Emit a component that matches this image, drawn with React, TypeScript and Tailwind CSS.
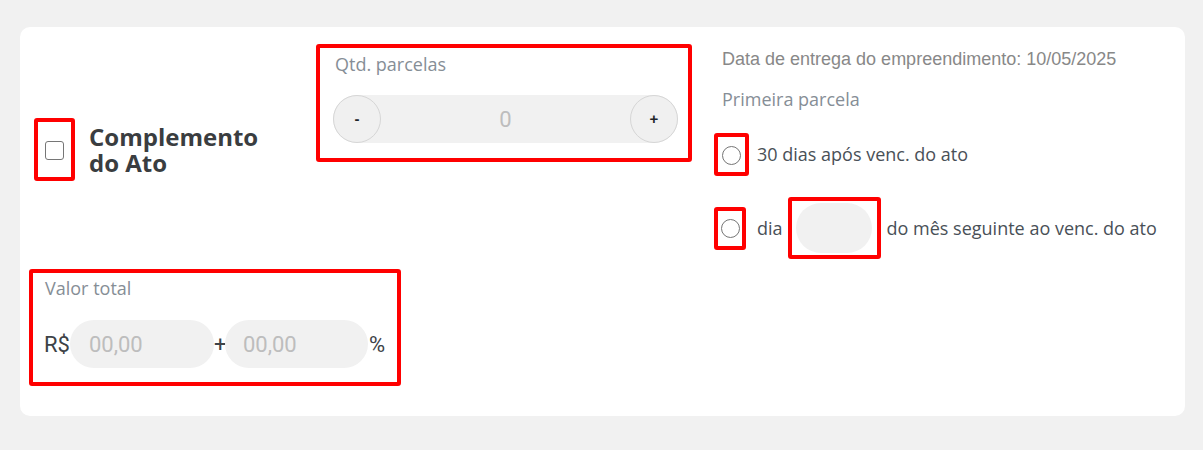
export default function App() {
  const open = { fontFamily: '"Open Sans", "Noto Sans", sans-serif' };
  const roboto = { fontFamily: 'Roboto, "Liberation Sans", sans-serif' };
  const arial = { fontFamily: '"Liberation Sans", Arial, sans-serif' };

  return (
    <div className="w-[1203px] h-[450px] bg-[#f1f1f1] pt-[27px] pl-[20px]">
      <div className="w-[1165px] h-[389px] bg-white rounded-[10px] pt-[17px] px-[9px]">
        {/* linha de cima */}
        <div className="flex items-start">
          <div className="w-[287px] pl-[5px] mt-[74px] flex items-center">
            <div className="w-[41px] h-[63px] border-4 border-[#ff0000] rounded-[3px] flex items-center justify-center">
              <span className="block w-[19px] h-[19px] mt-[2px] border-[1.5px] border-[#767676] rounded-[3px] bg-white" />
            </div>
            <p
              className="ml-[14px] text-[24px] leading-[26px] font-bold text-[#3a3d40]"
              style={open}
            >
              Complemento
              <br />
              do Ato
            </p>
          </div>

          <div className="w-[376px] h-[118px] border-4 border-[#ff0000] rounded-[3px] pt-[4px] pl-[13px]">
            <p className="text-[18px] leading-[24px] text-[#868e96] pl-[2px]" style={open}>
              Qtd. parcelas
            </p>
            <div className="mt-[19px] w-[345px] h-[48px] flex items-center bg-[#f1f1f1] rounded-full">
              <button className="w-[48px] h-[48px] shrink-0 rounded-full border border-[#d6d6d6] bg-[#f0f0f0] flex items-center justify-center text-[15px] font-bold text-[#212529]" style={arial}>
                -
              </button>
              <span className="flex-1 text-center text-[22px] text-[#bdbdbd]" style={roboto}>
                0
              </span>
              <button className="w-[48px] h-[48px] shrink-0 rounded-full border border-[#d6d6d6] bg-[#f0f0f0] flex items-center justify-center text-[15px] font-bold text-[#212529]" style={arial}>
                +
              </button>
            </div>
          </div>

          <div className="ml-[22px] pt-[3px]">
            <p className="pl-[8px] text-[18px] leading-[24px] text-[#888888]" style={arial}>
              Data de entrega do empreendimento: 10/05/2025
            </p>
            <p className="pl-[8px] mt-[16px] text-[18px] leading-[24px] text-[#868e96]" style={open}>
              Primeira parcela
            </p>

            <div className="mt-[22px] flex items-center h-[43px]">
              <div className="w-[35px] h-[43px] border-4 border-[#ff0000] rounded-[3px] flex items-center justify-center">
                <span className="block w-[19px] h-[19px] mt-[1px] rounded-full border-[1.5px] border-[#767676]" />
              </div>
              <span className="ml-[8px] text-[18px] text-[#495057]" style={open}>
                30 dias após venc. do ato
              </span>
            </div>

            <div className="mt-[21px] flex items-center h-[62px]">
              <div className="w-[32px] h-[43px] border-4 border-[#ff0000] rounded-[3px] flex items-center justify-center">
                <span className="block w-[19px] h-[19px] rounded-full border-[1.5px] border-[#767676]" />
              </div>
              <span className="ml-[11px] text-[18px] text-[#495057]" style={open}>
                dia
              </span>
              <div className="ml-[5px] w-[93px] h-[62px] border-4 border-[#ff0000] rounded-[3px] flex items-center justify-center">
                <span className="block w-[76px] h-[50px] rounded-full bg-[#f1f1f1]" />
              </div>
              <span className="ml-[6px] text-[18px] text-[#495057]" style={open}>
                do mês seguinte ao venc. do ato
              </span>
            </div>
          </div>
        </div>

        {/* valor total */}
        <div className="mt-[10px] w-[372px] h-[117px] border-4 border-[#ff0000] rounded-[3px] pt-[3px] pl-[11px]">
          <p className="text-[18px] leading-[24px] text-[#868e96] pl-[1px]" style={open}>
            Valor total
          </p>
          <div className="mt-[20px] flex items-center" style={roboto}>
            <span className="text-[22px] text-[#3d4247]">R$</span>
            <div className="w-[144px] h-[48px] rounded-full bg-[#f1f1f1] flex items-center pl-[19px] text-[22px] text-[#bdbdbd]">
              00,00
            </div>
            <span className="w-[11px] text-center text-[22px] text-[#3d4247]">+</span>
            <div className="w-[143px] h-[48px] rounded-full bg-[#f1f1f1] flex items-center pl-[18px] text-[22px] text-[#bdbdbd]">
              00,00
            </div>
            <span className="ml-[1px] text-[22px] text-[#3d4247]">%</span>
          </div>
        </div>
      </div>
    </div>
  );
}
